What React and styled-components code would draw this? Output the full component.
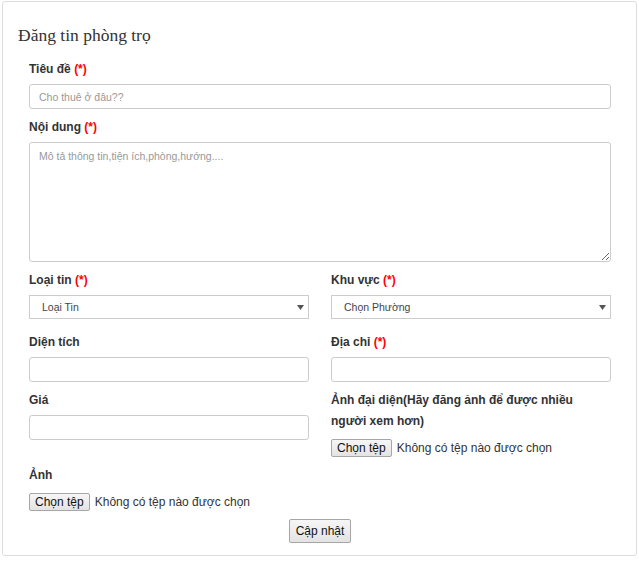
import React from "react";
import styled, { createGlobalStyle } from "styled-components";

const GlobalStyle = createGlobalStyle`
  body {
    margin: 0;
    background: #fff;
    font-family: "Liberation Sans", Arial, sans-serif;
    color: #333;
  }
  * { box-sizing: border-box; }
`;

const Panel = styled.div`
  margin: 1px 2px;
  border: 1px solid #ddd;
  border-radius: 3px;
  background: #fff;
  padding: 23px 25px 12px 15px;
`;

const Title = styled.h3`
  margin: 0 0 13px;
  font-family: "Liberation Serif", "Times New Roman", serif;
  font-weight: normal;
  font-size: 17.5px;
  line-height: 21px;
  color: #333;
`;

const Form = styled.form`
  padding-left: 11px;
`;

const Field = styled.div`
  margin-bottom: 8px;
`;

const Label = styled.label`
  display: block;
  font-weight: bold;
  font-size: 12px;
  line-height: 21px;
  margin-bottom: 4px;
  color: #333;
`;

const Req = styled.span`
  color: #f00;
`;

const Input = styled.input`
  display: block;
  width: 100%;
  height: 25px;
  border: 1px solid #ccc;
  border-radius: 3px;
  padding: 0 9px;
  font-family: "Liberation Sans", Arial, sans-serif;
  font-size: 10.5px;
  color: #555;
  &::placeholder { color: #999; }
`;

const TextArea = styled.textarea`
  display: block;
  width: 100%;
  height: 120px;
  border: 1px solid #ccc;
  border-radius: 3px;
  padding: 7px 9px;
  font-family: "Liberation Sans", Arial, sans-serif;
  font-size: 10.5px;
  color: #555;
  &::placeholder { color: #999; }
`;

const Grid = styled.div`
  display: grid;
  grid-template-columns: 1fr 1fr;
  column-gap: 22px;
`;

const SelectWrap = styled.div`
  position: relative;
  margin-bottom: 5px;
`;

const Select = styled.select`
  display: block;
  width: 100%;
  height: 24px;
  border: 1px solid #ccc;
  border-radius: 0;
  background: #fff;
  appearance: none;
  padding: 0 12px;
  font-family: "Liberation Sans", Arial, sans-serif;
  font-size: 10.5px;
  color: #444;
`;

const Arrow = styled.svg`
  position: absolute;
  right: 4px;
  top: 9px;
  pointer-events: none;
`;

const FileRow = styled.div`
  display: flex;
  align-items: center;
  gap: 5px;
  padding-top: 3px;
  font-size: 12px;
  color: #333;
`;

const Button = styled.button`
  font-family: "Liberation Sans", Arial, sans-serif;
  font-size: 12px;
  color: #111;
  background: linear-gradient(#f6f6f6, #e3e3e3);
  border: 1px solid #a6a6a6;
  border-radius: 2px;
  padding: 0 ${(p) => (p.$big ? 6 : 5)}px;
  height: ${(p) => (p.$big ? 24 : 18)}px;
  line-height: 1;
`;

const Actions = styled.div`
  display: flex;
  justify-content: center;
`;

function Caret() {
  return (
    <Arrow width="9" height="7" viewBox="0 0 9 7">
      <path d="M1 1h7L4.5 6z" fill="#555" />
    </Arrow>
  );
}

function FilePicker() {
  return (
    <FileRow>
      <Button type="button">Chọn tệp</Button>
      <span>Không có tệp nào được chọn</span>
    </FileRow>
  );
}

export default function App() {
  return (
    <>
      <GlobalStyle />
      <Panel>
        <Title>Đăng tin phòng trọ</Title>
        <Form onSubmit={(e) => e.preventDefault()}>
          <Field>
            <Label>
              Tiêu đề <Req>(*)</Req>
            </Label>
            <Input placeholder="Cho thuê ở đâu??" />
          </Field>
          <Field>
            <Label>
              Nội dung <Req>(*)</Req>
            </Label>
            <TextArea placeholder="Mô tả thông tin,tiện ích,phòng,hướng...." />
          </Field>
          <Grid>
            <Field>
              <Label>
                Loại tin <Req>(*)</Req>
              </Label>
              <SelectWrap>
                <Select defaultValue="">
                  <option value="">Loại Tin</option>
                </Select>
                <Caret />
              </SelectWrap>
            </Field>
            <Field>
              <Label>
                Khu vực <Req>(*)</Req>
              </Label>
              <SelectWrap>
                <Select defaultValue="">
                  <option value="">Chọn Phường</option>
                </Select>
                <Caret />
              </SelectWrap>
            </Field>
            <Field>
              <Label>Diện tích</Label>
              <Input />
            </Field>
            <Field>
              <Label>
                Địa chỉ <Req>(*)</Req>
              </Label>
              <Input />
            </Field>
            <Field>
              <Label>Giá</Label>
              <Input />
            </Field>
            <Field>
              <Label>Ảnh đại diện(Hãy đăng ảnh để được nhiều người xem hơn)</Label>
              <FilePicker />
            </Field>
          </Grid>
          <Field>
            <Label>Ảnh</Label>
            <FilePicker />
          </Field>
          <Actions>
            <Button type="submit" $big>
              Cập nhật
            </Button>
          </Actions>
        </Form>
      </Panel>
    </>
  );
}
